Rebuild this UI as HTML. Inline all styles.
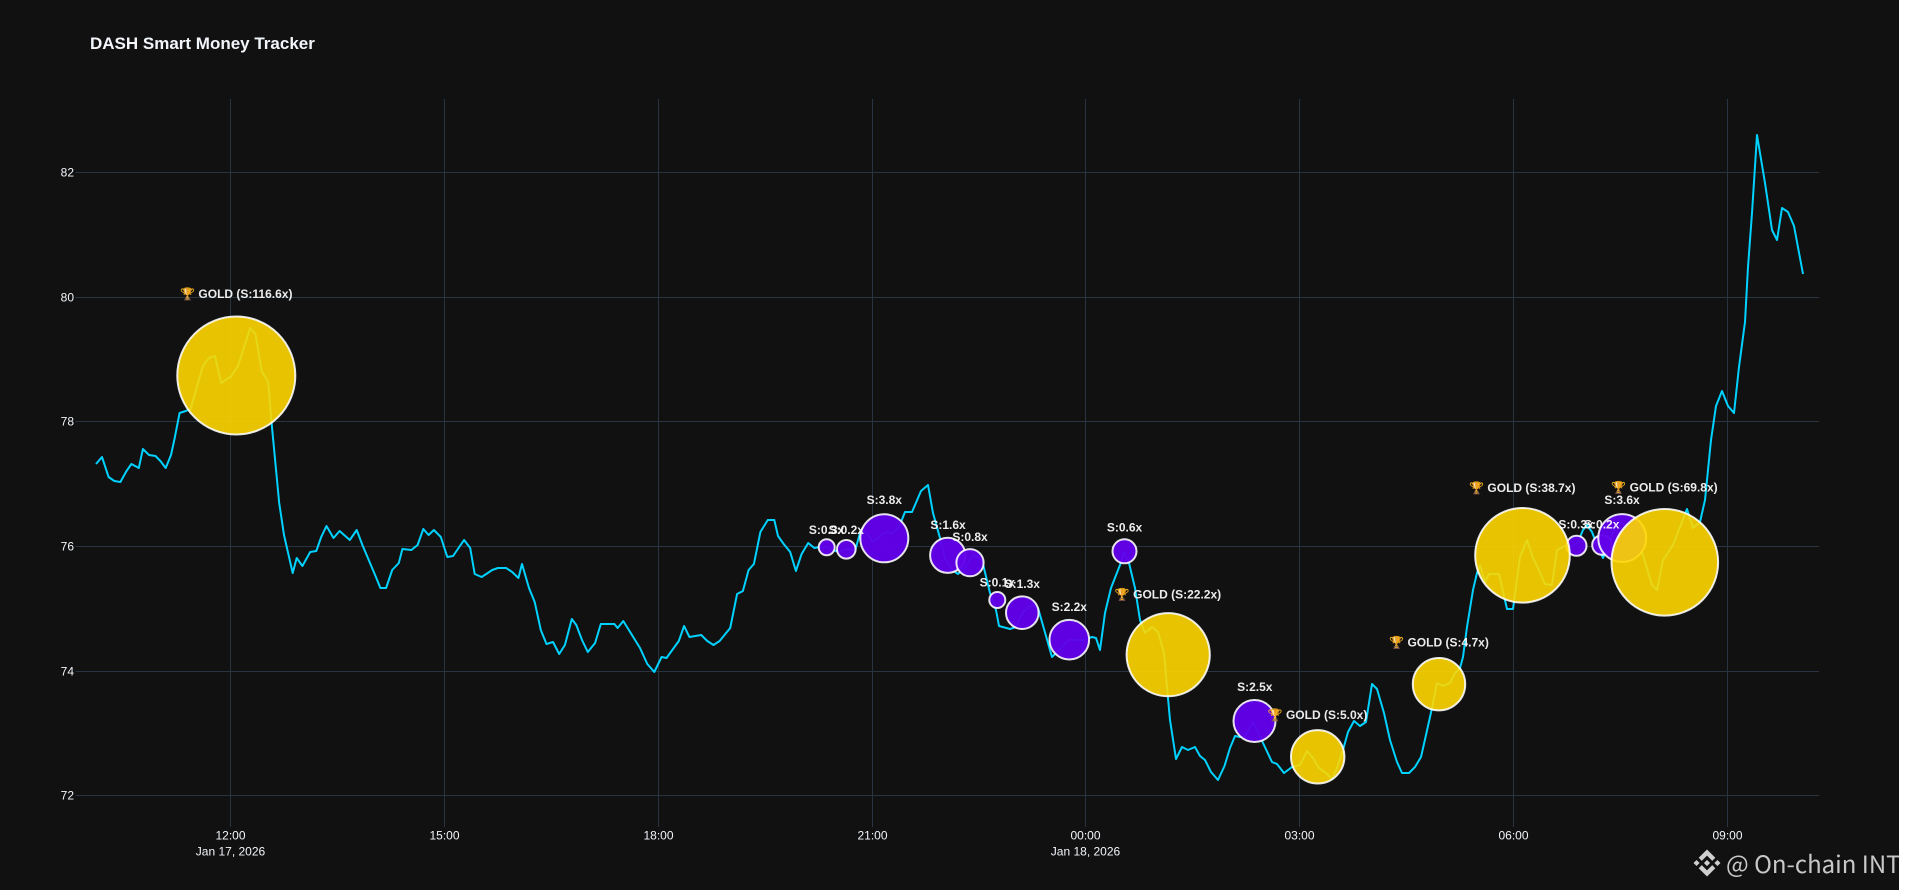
<!DOCTYPE html>
<html><head><meta charset="utf-8"><title>DASH Smart Money Tracker</title>
<style>
html,body{margin:0;padding:0;background:#fff;width:1907px;height:890px;overflow:hidden}
svg{display:block;position:absolute;left:0;top:0}
text{font-family:"Liberation Sans","Noto Color Emoji",Arial,sans-serif}
.t{fill:#f2f5fa;font-size:12px}
.l{fill:#fff;fill-opacity:.92;font-size:12px;font-weight:bold;text-anchor:middle}
.p{fill:#6200ea;fill-opacity:.96;stroke:#fff;stroke-opacity:.88;stroke-width:2}
.g{fill:#ffd700;fill-opacity:.9;stroke:#fff;stroke-opacity:.88;stroke-width:2}
</style></head><body>
<svg width="1899" height="890" viewBox="0 0 1899 890" xmlns="http://www.w3.org/2000/svg">
<rect width="1899" height="890" fill="#111111"/>
<g stroke="#283442" stroke-width="1" shape-rendering="crispEdges">
<path d="M75.5 172.5H1819M75.5 297.5H1819M75.5 421.5H1819M75.5 546.5H1819M75.5 671.5H1819M75.5 795.5H1819"/>
<path d="M230.5 99V827M444.5 99V827M658.5 99V827M872.5 99V827M1085.5 99V827M1299.5 99V827M1513.5 99V827M1727.5 99V827"/>
</g>
<g class="t" text-anchor="end">
<text class="t" x="74" y="176.5">82</text><text class="t" x="74" y="301.5">80</text><text class="t" x="74" y="425.5">78</text><text class="t" x="74" y="550.5">76</text><text class="t" x="74" y="675.5">74</text><text class="t" x="74" y="799.5">72</text>
</g>
<g class="t" text-anchor="middle">
<text class="t" x="230.5" y="839.5">12:00</text><text class="t" x="230.5" y="855.5">Jan 17, 2026</text>
<text class="t" x="444.5" y="839.5">15:00</text><text class="t" x="658.5" y="839.5">18:00</text><text class="t" x="872.5" y="839.5">21:00</text>
<text class="t" x="1085.5" y="839.5">00:00</text><text class="t" x="1085.5" y="855.5">Jan 18, 2026</text>
<text class="t" x="1299.5" y="839.5">03:00</text><text class="t" x="1513.5" y="839.5">06:00</text><text class="t" x="1727.5" y="839.5">09:00</text>
</g>
<text x="90" y="49" fill="#f2f5fa" font-size="17" font-weight="bold">DASH Smart Money Tracker</text>
<polyline fill="none" stroke="#00d2ff" stroke-width="2" stroke-linejoin="round" points="96,464 102,457 108.6,477 114.3,481 120.4,482 126.5,471 131.4,464 138.8,468 142.9,449 149,455 155.5,456 160.4,461 165.7,468 171,455 174.7,438 179.6,413 185.7,411 190.6,409 202.9,366 209,358 215,356 221.2,383 231.4,376 238,366 250.2,328 255.5,334 261.6,371 268.2,382 271.4,421 279.2,503 284,535 292.7,573 296.7,558 302.4,566 310.2,552 316.3,551 321.2,537 326.5,526 333.5,538 339.6,531 349.8,540 356.7,530 362.4,545 375.5,576 380.4,588 386.1,588 392.2,570 398.8,563 402.4,549 411.4,550 417.6,545 423.3,529 428.6,535 433.9,530 440.8,537 447.3,557 453.1,556 459.2,547 464.1,540 470.2,548 474.7,574 481.6,577 487.8,573 492.2,570 498,568 506.1,568 512.2,572 518.4,578 522,564 529,588 534.7,602 540.8,630 546.5,644 553,642 559.2,654 564.9,645 571.8,619 576.3,625 582,640 587.8,652 595.1,643 600.8,624 614.3,624 617.6,628 623.3,621 640,648 647.3,664 654.3,672 661.6,657 666.5,658 678.8,641 684.1,626 689.4,637 701.2,635 707.3,641 713.5,645 719.6,641 730.2,628 737.1,594 742.9,591 748.6,570 753.9,564 760.4,532 767.8,520 774.3,520 778,536 783.7,544 790.2,552 795.9,571 801.6,554 808.2,543 814.3,548 819.6,547 827,547 833,550 839,552 847,549 855,551 860,533 866,532 873,542 879,537 886,532 893,533 899,527 905,512 912,512 921,491 928,485 933,513 940,538 945,558 952,570 958,574 967,565 973,555 982,560 990,593 996,610 999,626 1010,629 1016,627 1023,612 1032,605 1038,608 1052,657 1057,652 1069,640 1083,640 1092,637 1096,638 1100,650 1105,613 1111,588 1120,565 1124,552 1129,563 1135,588 1140,620 1145,633 1152,627 1158,632 1164,653 1167,687 1170,720 1176,759 1182,747 1188,750 1195,747 1200,756 1205,760 1211,772 1218,780 1224.5,766 1230,748 1235,736 1240,737 1245,737 1253,722 1263,743 1272,762 1277,764 1284,773 1292,767 1300,765 1307,751 1313,758 1319,768 1326,773 1332,779 1337,768 1343,750 1348,732 1354,721 1360,726 1366,722 1372,684 1377,689 1384,713 1390,740 1397,762 1402,773 1409,773 1415,767 1421,757 1426,735 1432,708 1437,683 1443,686 1450,683 1455,673 1460,668 1463,657 1467,627 1473,590 1477,573 1480,565 1485,582 1489,574 1499,574 1507,609 1513,609 1520,557 1527,540 1533,558 1538,568 1545,584 1552,585 1557,550 1565,546 1573,546 1578,542 1583,530 1587,525 1592,532 1597,545 1603,558 1609,545 1615,525 1621,522 1628,528 1636,535 1642,552 1652,585 1657,590 1663,560 1673,545 1680,527 1687,509 1693,528 1700,522 1705,500 1711,440 1716,406 1722,391 1728,406 1734,413 1739,367 1745,322 1748,267 1752,213 1757,135 1765,183 1772,230 1777,240 1782,208 1788,212 1794,226 1803,274"/>
<g>
<circle class="p" cx="826.7" cy="547.3" r="8"/>
<circle class="p" cx="846.3" cy="549.3" r="9.3"/>
<circle class="p" cx="884.3" cy="538.3" r="24"/>
<circle class="p" cx="947.7" cy="555.3" r="17.6"/>
<circle class="p" cx="970" cy="562.7" r="13.6"/>
<circle class="p" cx="997.3" cy="600" r="8"/>
<circle class="p" cx="1022.3" cy="612.7" r="16.3"/>
<circle class="p" cx="1069.3" cy="639.7" r="19.8"/>
<circle class="p" cx="1124.5" cy="551.3" r="12"/>
<circle class="p" cx="1254.5" cy="721" r="21"/>
<circle class="p" cx="1576.5" cy="545.8" r="10"/>
<circle class="p" cx="1602" cy="545" r="9.8"/>
<circle class="p" cx="1622.2" cy="538" r="23.9"/>
</g>
<g>
<text class="l" x="826.6" y="534">S:0.3x</text>
<text class="l" x="846.3" y="534">S:0.2x</text>
<text class="l" x="884.3" y="504">S:3.8x</text>
<text class="l" x="948" y="529">S:1.6x</text>
<text class="l" x="970" y="541">S:0.8x</text>
<text class="l" x="997.3" y="586.3">S:0.1x</text>
<text class="l" x="1022.3" y="588">S:1.3x</text>
<text class="l" x="1069.3" y="611">S:2.2x</text>
<text class="l" x="1124.5" y="531.7">S:0.6x</text>
<text class="l" x="1254.8" y="691">S:2.5x</text>
<text class="l" x="1576" y="528.3">S:0.3x</text>
<text class="l" x="1601.7" y="528.3">S:0.2x</text>
<text class="l" x="1622" y="504">S:3.6x</text>
</g>
<g>
<circle class="g" cx="236.3" cy="375.5" r="59"/>
<circle class="g" cx="1168.2" cy="654.7" r="41.6"/>
<circle class="g" cx="1317.7" cy="756.8" r="26.7"/>
<circle class="g" cx="1439" cy="684.2" r="26.2"/>
<circle class="g" cx="1522.5" cy="555.3" r="47.3"/>
<circle class="g" cx="1664.8" cy="562.3" r="53.3"/>
</g>
<g>
<text class="l" x="236.3" y="298">🏆 GOLD (S:116.6x)</text>
<text class="l" x="1168" y="598.7">🏆 GOLD (S:22.2x)</text>
<text class="l" x="1317.5" y="719">🏆 GOLD (S:5.0x)</text>
<text class="l" x="1439" y="646.7">🏆 GOLD (S:4.7x)</text>
<text class="l" x="1522.3" y="491.8">🏆 GOLD (S:38.7x)</text>
<text class="l" x="1664.5" y="491.4">🏆 GOLD (S:69.8x)</text>
</g>
<svg x="1693.5" y="849.5" width="27" height="27" viewBox="0 0 126.61 126.61"><path fill="#cfcfcf" d="M38.73 53.2l24.59-24.58 24.6 24.6 14.3-14.31L63.32 0 24.42 38.9l14.31 14.3zM0 63.31l14.3-14.31 14.31 14.31-14.31 14.3L0 63.31zm38.73 10.11l24.59 24.59 24.6-24.6 14.31 14.29-38.9 38.91-38.91-38.88-.02-.02 14.33-14.29zm59.25-10.1l14.31-14.31 14.3 14.31-14.3 14.3-14.31-14.3zm-20.14-.01L63.32 48.78 52.6 59.5l-1.23 1.23-2.54 2.54 14.49 14.5 14.52-14.52z"/></svg>
<text x="1726" y="873" fill="#c8c8c8" font-size="24" style="font-family:'Noto Sans CJK JP','Liberation Sans',sans-serif">@ On-chain INT</text>
</svg>
</body></html>
